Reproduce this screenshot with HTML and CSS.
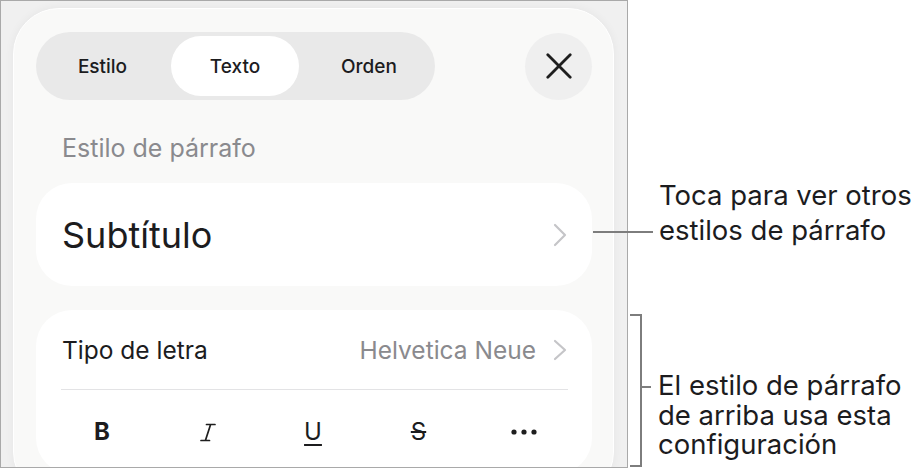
FILE: index.html
```html
<!DOCTYPE html>
<html lang="es">
<head>
<meta charset="utf-8">
<title>Formato de texto</title>
<link rel="stylesheet" href="styles.css">
</head>
<body>
<div class="stage">
  <div class="frame">
    <div class="panel">
      <div class="toolbar">
        <div class="segmented">
          <div class="seg seg-first">Estilo</div>
          <div class="seg seg-active">Texto</div>
          <div class="seg seg-last">Orden</div>
        </div>
        <div class="close">
          <svg width="26" height="26" viewBox="0 0 26 26"><path d="M1.8 1.8 L24.2 24.2 M24.2 1.8 L1.8 24.2" stroke="#1e1e1e" stroke-width="2.8" stroke-linecap="round" fill="none"/></svg>
        </div>
      </div>
      <div class="section-title">Estilo de párrafo</div>
      <div class="card style-card">
        <span class="style-name">Subtítulo</span>
        <svg class="chev-big" width="14" height="24" viewBox="0 0 14 24"><path d="M2 2 L12 12 L2 22" stroke="#c5c5c8" stroke-width="2.2" stroke-linecap="round" stroke-linejoin="round" fill="none"/></svg>
      </div>
      <div class="card font-card">
        <div class="font-row">
          <span class="font-label">Tipo de letra</span>
          <span class="font-value">Helvetica Neue
            <svg class="chev-small" width="14" height="22" viewBox="0 0 14 22"><path d="M2 2 L12 11 L2 20" stroke="#c5c5c8" stroke-width="2.2" stroke-linecap="round" stroke-linejoin="round" fill="none"/></svg>
          </span>
        </div>
        <div class="format-row">
          <span class="fmt fmt-bold">B</span>
          <span class="fmt">
            <svg width="16" height="19" viewBox="0 0 16 19"><path d="M6.5 1.5 H15 M1 17.5 H9.5 M10.6 1.5 L5.4 17.5" stroke="#1e1e1e" stroke-width="1.7" stroke-linecap="round" fill="none"/></svg>
          </span>
          <span class="fmt fmt-under">U</span>
          <span class="fmt fmt-strike">S</span>
          <span class="fmt">
            <svg width="26" height="6" viewBox="0 0 26 6"><circle cx="3" cy="3" r="2.6" fill="#1e1e1e"/><circle cx="13" cy="3" r="2.6" fill="#1e1e1e"/><circle cx="23" cy="3" r="2.6" fill="#1e1e1e"/></svg>
          </span>
        </div>
      </div>
    </div>
  </div>

  <div class="callout callout-top">
    <span class="leader"></span>
    <div class="callout-text">
      <span class="line">Toca para ver otros</span>
      <span class="line">estilos de párrafo</span>
    </div>
  </div>

  <div class="callout callout-bottom">
    <span class="bracket"></span>
    <span class="bracket-tick"></span>
    <div class="callout-text callout-text-tight">
      <span class="line">El estilo de párrafo</span>
      <span class="line">de arriba usa esta</span>
      <span class="line">configuración</span>
    </div>
  </div>
</div>
</body>
</html>
```

FILE: styles.css
```css
* { box-sizing: border-box; }

html, body {
  margin: 0;
  padding: 0;
  background: #ffffff;
}

body {
  font-family: Inter, "Noto Sans", "Liberation Sans", sans-serif;
  color: #1c1c1e;
}

.stage {
  position: relative;
  width: 920px;
  height: 471px;
  overflow: hidden;
}

/* device frame */
.frame {
  width: 628px;
  height: 468px;
  border: 1px solid #a9a9a9;
  background: #f0f0f0;
  padding: 7px 13px 0 12px;
  overflow: hidden;
}

.panel {
  width: 601px;
  height: 490px;
  border: 1px solid #ffffff;
  border-radius: 46px;
  background: #f9f9f8;
  box-shadow: 0 0 10px rgba(0, 0, 0, 0.05);
  padding: 23px 21px 0 22px;
}

/* top bar */
.toolbar {
  display: flex;
  justify-content: space-between;
  align-items: center;
  height: 68px;
}

.segmented {
  display: grid;
  grid-template-columns: 131px 128px 132px;
  width: 399px;
  height: 68px;
  padding: 4px;
  border-radius: 34px;
  background: #e9e9e9;
}

.seg {
  display: flex;
  align-items: center;
  justify-content: center;
  font-size: 19px;
  font-weight: 500;
  color: #1c1c1e;
  border-radius: 30px;
}

.seg-first { padding-right: 6px; }
.seg-last { padding-left: 8px; }

.seg-active {
  background: #ffffff;
}

.close {
  width: 67px;
  height: 67px;
  border-radius: 50%;
  background: #efefef;
  display: flex;
  align-items: center;
  justify-content: center;
}

.close svg { display: block; }

.section-title {
  margin-top: 35px;
  padding-left: 26px;
  font-size: 25px;
  line-height: 26px;
  color: #8a8a8e;
}

.card {
  background: #ffffff;
  border-radius: 36px;
}

.style-card {
  margin-top: 22px;
  height: 103px;
  display: flex;
  align-items: center;
  justify-content: space-between;
  padding: 0 25px 0 26px;
}

.style-name {
  font-size: 36px;
  color: #1c1c1e;
}

.chev-big { display: block; }

.font-card {
  margin-top: 24px;
  padding: 0 24px 0 25px;
}

.font-row {
  height: 80px;
  display: flex;
  align-items: center;
  justify-content: space-between;
  border-bottom: 1px solid #e3e3e5;
  padding-left: 1px;
}

.font-label {
  font-size: 24.5px;
  color: #1c1c1e;
}

.font-value {
  display: flex;
  align-items: center;
  gap: 17px;
  font-size: 24.5px;
  color: #8a8a8e;
  margin-right: 1px;
}

.chev-small { display: block; }

.format-row {
  height: 84px;
  display: flex;
  align-items: center;
  justify-content: space-between;
  padding: 0 29px 0 26px;
}

.fmt {
  width: 30px;
  display: flex;
  justify-content: center;
  align-items: center;
  font-size: 24px;
  line-height: 30px;
  color: #1c1c1e;
}

.fmt svg { display: block; }

.fmt-bold { font-weight: 700; }

.fmt-under {
  text-decoration: underline;
  text-decoration-thickness: 2px;
  text-underline-offset: 4px;
}

.fmt-strike {
  text-decoration: line-through;
  text-decoration-thickness: 2px;
}

/* callouts (annotations drawn over the edge of the frame) */
.callout {
  position: absolute;
}

.callout-text {
  display: flex;
  flex-direction: column;
  font-size: 27.5px;
  color: #1c1c1e;
  white-space: nowrap;
}

.callout-text .line {
  display: block;
  height: 35px;
  line-height: 35px;
}

.callout-text-tight .line {
  height: 29.5px;
  line-height: 29.5px;
}

.callout-top {
  left: 593px;
  top: 178px;
  display: flex;
  align-items: flex-end;
}

.callout-top .leader {
  display: block;
  width: 60px;
  height: 2px;
  background: #7d7d7d;
  margin-right: 6px;
  margin-bottom: 15px;
}

.callout-bottom {
  left: 630px;
  top: 314px;
  width: 290px;
  height: 153px;
}

.callout-bottom .bracket {
  position: absolute;
  left: 0;
  top: 0;
  width: 12px;
  height: 153px;
  border: 2px solid #7d7d7d;
  border-left: none;
}

.callout-bottom .bracket-tick {
  position: absolute;
  left: 12px;
  top: 72px;
  width: 9px;
  height: 2px;
  background: #7d7d7d;
}

.callout-bottom .callout-text {
  position: absolute;
  left: 28px;
  top: 57px;
}
```
